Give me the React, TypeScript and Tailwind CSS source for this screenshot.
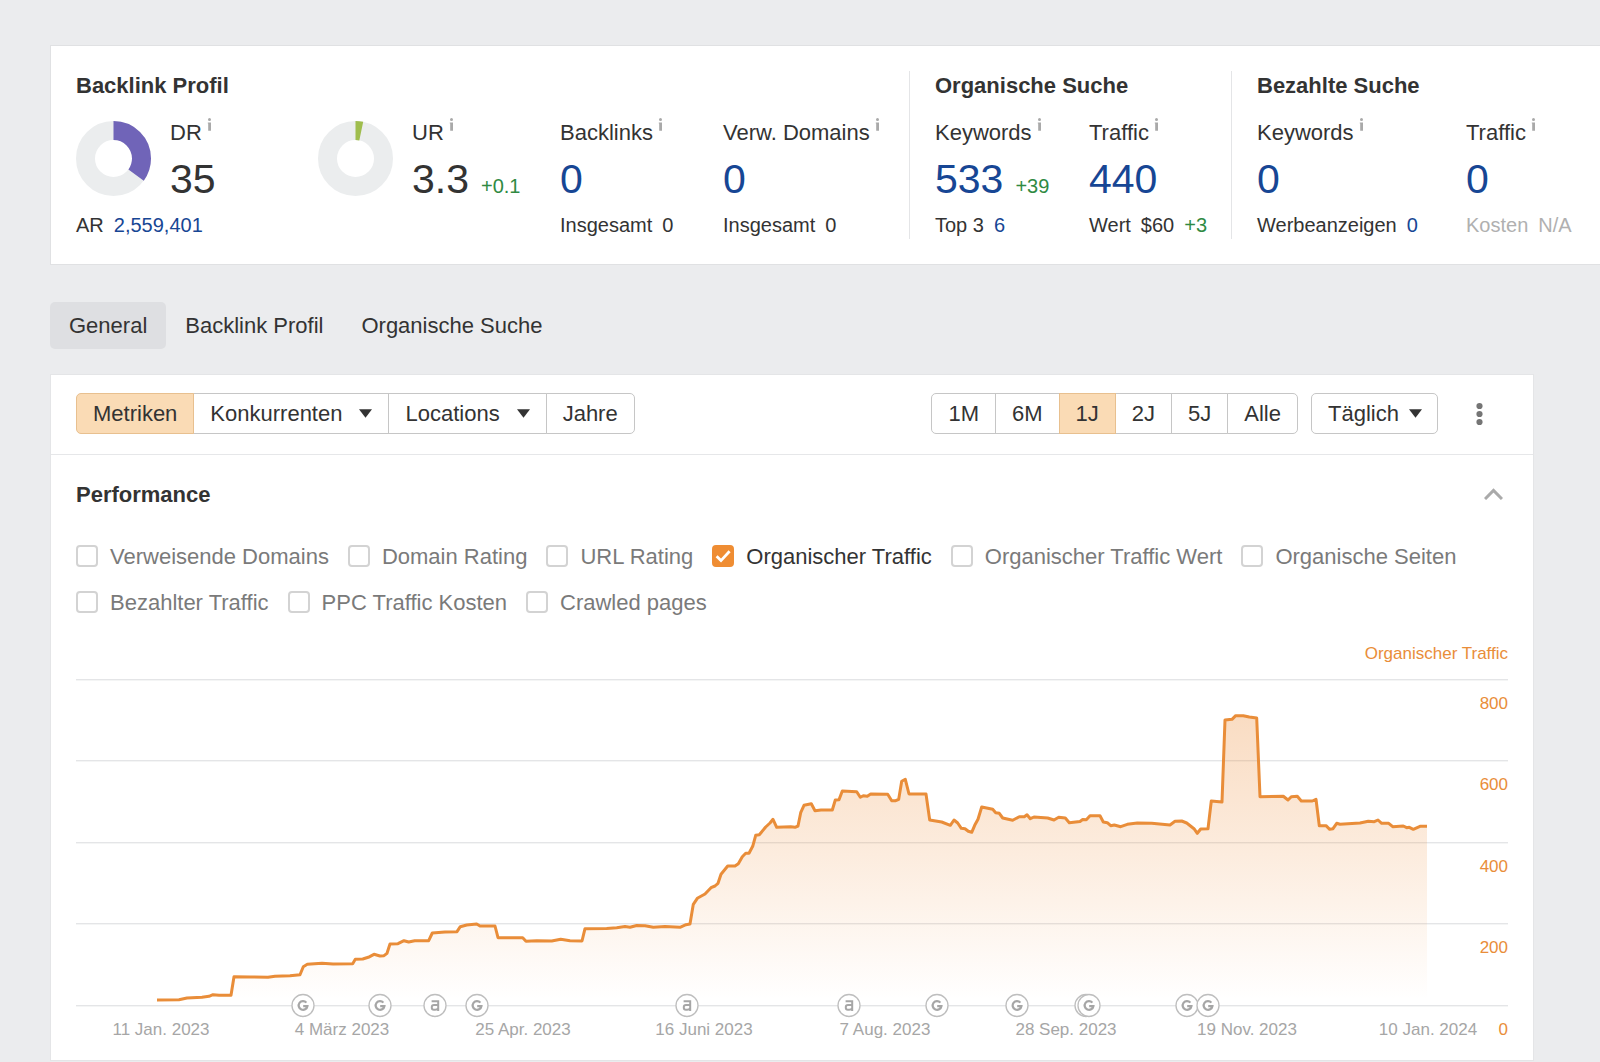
import { useState, type ReactNode } from "react"
import clsx from "clsx"

const TABS = ["General", "Backlink Profil", "Organische Suche"]
const RANGES = ["1M", "6M", "1J", "2J", "5J", "Alle"]
const METRICS = [
  "Verweisende Domains",
  "Domain Rating",
  "URL Rating",
  "Organischer Traffic",
  "Organischer Traffic Wert",
  "Organische Seiten",
  "Bezahlter Traffic",
  "PPC Traffic Kosten",
  "Crawled pages",
]

const GRID = [
  { y: 39, label: "800" },
  { y: 120, label: "600" },
  { y: 202, label: "400" },
  { y: 283, label: "200" },
  { y: 365, label: "0" },
]

const DATES = [
  "11 Jan. 2023",
  "4 März 2023",
  "25 Apr. 2023",
  "16 Juni 2023",
  "7 Aug. 2023",
  "28 Sep. 2023",
  "19 Nov. 2023",
  "10 Jan. 2024",
]

const MARKERS = [
  { x: 227, kind: "google" },
  { x: 304, kind: "google" },
  { x: 359, kind: "ahrefs" },
  { x: 401, kind: "google" },
  { x: 611, kind: "ahrefs" },
  { x: 773, kind: "ahrefs" },
  { x: 861, kind: "google" },
  { x: 941, kind: "google" },
  { x: 1010, kind: "google" },
  { x: 1013, kind: "google" },
  { x: 1111, kind: "google" },
  { x: 1132, kind: "google" },
]

const TRAFFIC_LINE =
  "81,360 103,359.7 111,358 126,357.3 133,356.3 137,354.7 143,355.3 155,355.3 158,336.7 174,337 192,337.3 199,336.3 214,335.7 224,334.7 227.3,326.7 231.3,324.3 246,323.3 257,324 276.7,323.7 279.3,319.3 286.7,319 292.3,317.3 298,314.3 304,316 308,315.7 311,313.3 314,304 322,303.7 328,300.7 332.7,302 338.7,300.7 352.7,300.7 356.3,293 369,292 381,291.7 384.3,286.7 390.7,285 400.7,284 404,286 419,286 422,297.7 446.7,297.7 450,301.3 460.7,300.7 475.7,301 484.7,299.3 494,300.7 506,301 509,288.7 530.7,288.5 540.7,287.7 549,286.6 554,287.3 560.7,285.5 569,285.8 577.3,287.3 589,286.6 604,287.3 610,284.7 614,284 617.3,264.3 621.3,258.3 629,254 635,247.7 639,246 642,243.3 645,234.3 651.7,226 659,226 662.3,223.7 666.3,216.7 669.7,213.3 673,213.3 676.7,206.3 679.7,195.3 683.3,194.7 689.7,187 694,183 697,179.3 700.7,187.3 714.7,186.7 719,187.3 722,186 724.7,172.7 728,165.3 735.3,163.7 739,170.7 745,170 756.3,170 759.3,160 763,159.7 766.3,151 780.7,151.7 784.3,157.3 787.3,155.7 791.3,156.3 794.7,154 811.7,154.3 815.7,160.7 819.7,160.7 822.7,159.3 825.7,141.3 829.3,139.3 833,154 850,154 853.7,180 865.7,182 874.3,185.3 878,180 881.7,183 885.3,188.3 889,188.7 892.3,191.3 895.7,192.3 898.7,185.3 902,179.3 905.7,167 916.7,169.3 919.7,172.7 923.3,173.3 926.7,178 936.7,180.3 943.3,176.7 948.3,176.7 951,174.7 954.3,178.7 958,177 971.7,178 978,180 982.7,177.3 989.3,178 993.3,182.7 1004,181.5 1006.7,179.5 1010.3,179.7 1014,175.8 1024,175.8 1027.3,182 1031.3,182.7 1034.7,185.7 1038.3,185 1044.7,186.7 1051.3,184.3 1061.3,183 1075.7,183.3 1094,185 1099,181.3 1105.7,181 1110.7,183 1118,188.7 1121.3,193.3 1124.7,189 1132,188.7 1135.3,161 1146,162 1149,80 1156,79.3 1159.7,75.7 1167.3,75.7 1173.3,77 1180.7,78 1184,156.7 1207.3,156.3 1212,160 1215.3,156.7 1221.3,156.3 1225.3,161 1236.3,161 1240,159.3 1243.3,185.7 1250,185.7 1253.7,189.3 1257,188.7 1260.7,183.3 1264,184.3 1284,183 1292.3,181.3 1298.3,181.7 1302,180 1305.7,183.3 1312.7,183.3 1316.7,186.7 1327.3,186 1330.7,187.7 1333.3,187.3 1337.3,189.3 1344,186.3 1351,186.3"

function InfoMark() {
  return (
    <svg width="5" height="13" viewBox="0 0 5 13" className="shrink-0 fill-[#a9a9a9]" aria-hidden="true">
      <circle cx="2.5" cy="1.5" r="1.5" />
      <path d="M0.8 4.4h3.2v8.4H1.2V5.6H0.8z" />
    </svg>
  )
}

// share is a fraction of the full ring, starting at 12 o'clock
function Donut({ share, color }: { share: number; color: string }) {
  const r = 28
  const length = 2 * Math.PI * r
  return (
    <svg width="75" height="75" viewBox="0 0 75 75" className="mt-[3px] shrink-0" aria-hidden="true">
      <g fill="none" strokeWidth="19" transform="rotate(-90 37.5 37.5)">
        <circle cx="37.5" cy="37.5" r={r} stroke="#ebedee" />
        <circle cx="37.5" cy="37.5" r={r} stroke={color} strokeDasharray={`${share * length} ${length}`} />
      </g>
    </svg>
  )
}

interface StatProps {
  label: string
  value: string
  delta?: string
  link?: boolean
  children?: ReactNode
}

function Stat({ label, value, delta, link, children }: StatProps) {
  return (
    <div className="whitespace-nowrap">
      <div className="flex h-[30px] gap-[5px] leading-[30px]">
        {label}
        <InfoMark />
      </div>
      <div className="mt-[7px] flex h-12 items-baseline gap-3 text-[41px] leading-[48px]">
        {link ? <a href="#" className="text-[#174694]">{value}</a> : <span>{value}</span>}
        {delta && <span className="text-[20px] leading-7 text-[#2f8a43]">{delta}</span>}
      </div>
      {children && <div className="mt-2 flex gap-[10px] text-[20px] leading-7">{children}</div>}
    </div>
  )
}

function Caret() {
  return (
    <svg width="13" height="9" viewBox="0 0 13 9" className="shrink-0 fill-[#333]" aria-hidden="true">
      <path d="M0 0.2h13L6.5 8.8z" />
    </svg>
  )
}

interface SegmentProps {
  active?: boolean
  onClick?: () => void
  children: ReactNode
}

function Segment({ active, onClick, children }: SegmentProps) {
  return (
    <button
      onClick={onClick}
      className={clsx(
        "-ml-px flex h-[41px] items-center gap-[17px] border px-4 first:ml-0 first:rounded-l-[5px] last:rounded-r-[5px]",
        active ? "relative border-[#e8c08f] bg-[#fadbb5]" : "border-[#c6c6c6] bg-white",
      )}
    >
      {children}
    </button>
  )
}

function Marker({ x, kind }: { x: number; kind: string }) {
  return (
    <g transform={`translate(${x} 365.5)`} fill="none" stroke="#a6a6a6">
      <circle r="11" fill="#fff" stroke="#bebebe" strokeWidth="1.3" />
      {kind === "google" ? (
        <path d="M3.4 -2.9A4.4 4.4 0 1 0 4.4 0.7H0.2" strokeWidth="2.2" />
      ) : (
        <path d="M-3.4 -4.2H3.2V5.4M3.2 -0.4H-1Q-3.2 -0.4 -3.2 1.6V2.2Q-3.2 4.2 -1.2 4.2H0.2Q2 4.2 3.2 2.8" strokeWidth="2" />
      )}
    </g>
  )
}

function TrafficChart() {
  return (
    <svg viewBox="0 0 1432 400" className="mt-[15px] block w-full text-[17px]" role="img" aria-label="Organischer Traffic">
      <defs>
        <linearGradient id="traffic-fill" gradientUnits="userSpaceOnUse" x1="0" y1="75" x2="0" y2="360">
          <stop offset="0" stopColor="#ed8b35" stopOpacity="0.3" />
          <stop offset="0.5" stopColor="#ed8b35" stopOpacity="0.16" />
          <stop offset="1" stopColor="#ed8b35" stopOpacity="0" />
        </linearGradient>
      </defs>
      {GRID.map((line) => (
        <rect key={line.y} x="0" y={line.y} width="1432" height="1.4" fill="#e4e5e7" />
      ))}
      <polygon points={`${TRAFFIC_LINE} 1351,365 81,365`} fill="url(#traffic-fill)" />
      <polyline points={TRAFFIC_LINE} fill="none" stroke="#e98d39" strokeWidth="3" strokeLinejoin="round" />
      {MARKERS.map((marker) => (
        <Marker key={marker.x} {...marker} />
      ))}
      <g fill="#a6a6a6" textAnchor="middle">
        {DATES.map((date, i) => (
          <text key={date} x={85 + i * 181} y="395">{date}</text>
        ))}
      </g>
      <g fill="#e98d39" textAnchor="end">
        <text x="1432" y="19">Organischer Traffic</text>
        {GRID.map((line) => (
          <text key={line.label} x="1432" y={line.y + 30}>{line.label}</text>
        ))}
      </g>
    </svg>
  )
}

export default function App() {
  const [tab, setTab] = useState("General")
  const [range, setRange] = useState("1J")
  const [selected, setSelected] = useState(["Organischer Traffic"])

  const toggle = (name: string) =>
    setSelected((prev) => (prev.includes(name) ? prev.filter((m) => m !== name) : [...prev, name]))

  return (
    <div className="min-h-screen overflow-x-hidden bg-[#ebecee] pt-[45px] pl-[50px] font-['Liberation_Sans',Arial,sans-serif] text-[22px] text-[#333]">
      <section className="flex border border-r-0 border-[#e0e1e3] bg-white py-[25px] pl-[25px]">
        <div className="shrink-0">
          <h2 className="mb-[17px] leading-[30px] font-bold">Backlink Profil</h2>
          <div className="flex">
            <div className="w-[242px]">
              <div className="flex gap-[19px]">
                <Donut share={0.35} color="#7064b8" />
                <Stat label="DR" value="35" />
              </div>
              <div className="mt-2 flex gap-[10px] text-[20px] leading-7">
                <span>AR</span>
                <a href="#" className="text-[#174694]">2,559,401</a>
              </div>
            </div>
            <div className="flex w-[242px] gap-[19px]">
              <Donut share={0.033} color="#9fbd4d" />
              <Stat label="UR" value="3.3" delta="+0.1" />
            </div>
            <div className="w-[163px]">
              <Stat label="Backlinks" value="0" link>
                <span>Insgesamt</span>
                <span>0</span>
              </Stat>
            </div>
            <div className="w-[186px]">
              <Stat label="Verw. Domains" value="0" link>
                <span>Insgesamt</span>
                <span>0</span>
              </Stat>
            </div>
          </div>
        </div>

        <div className="shrink-0 border-l border-[#e4e5e7] pl-[25px]">
          <h2 className="mb-[17px] leading-[30px] font-bold">Organische Suche</h2>
          <div className="flex">
            <div className="w-[154px]">
              <Stat label="Keywords" value="533" delta="+39" link>
                <span>Top 3</span>
                <a href="#" className="text-[#174694]">6</a>
              </Stat>
            </div>
            <div className="w-[142px]">
              <Stat label="Traffic" value="440" link>
                <span>Wert</span>
                <span>$60</span>
                <span className="text-[#2f8a43]">+3</span>
              </Stat>
            </div>
          </div>
        </div>

        <div className="shrink-0 border-l border-[#e4e5e7] pl-[25px]">
          <h2 className="mb-[17px] leading-[30px] font-bold">Bezahlte Suche</h2>
          <div className="flex">
            <div className="w-[209px]">
              <Stat label="Keywords" value="0" link>
                <span>Werbeanzeigen</span>
                <a href="#" className="text-[#174694]">0</a>
              </Stat>
            </div>
            <Stat label="Traffic" value="0" link>
              <span className="text-[#b0b0b0]">Kosten</span>
              <span className="text-[#b0b0b0]">N/A</span>
            </Stat>
          </div>
        </div>
      </section>

      <nav className="mt-[37px] flex">
        {TABS.map((name) => (
          <button
            key={name}
            onClick={() => setTab(name)}
            className={clsx("h-[47px] rounded-[5px] px-[19px]", tab === name && "bg-[#dedfe2]")}
          >
            {name}
          </button>
        ))}
      </nav>

      <section className="mt-[25px] mr-[66px] border border-[#e4e5e7] bg-white">
        <div className="flex items-center justify-between border-b border-[#e6e7e9] pt-[18px] pr-[50px] pb-5 pl-[25px]">
          <div className="flex">
            <Segment active>Metriken</Segment>
            <Segment>Konkurrenten <Caret /></Segment>
            <Segment>Locations <Caret /></Segment>
            <Segment>Jahre</Segment>
          </div>
          <div className="flex items-center">
            <div className="flex">
              {RANGES.map((name) => (
                <Segment key={name} active={range === name} onClick={() => setRange(name)}>
                  {name}
                </Segment>
              ))}
            </div>
            <div className="relative ml-[13px]">
              <select aria-label="Täglich" className="block h-[41px] appearance-none rounded-[5px] border border-[#c6c6c6] bg-white pr-[38px] pl-4">
                <option>Täglich</option>
              </select>
              <span className="pointer-events-none absolute inset-y-0 right-4 flex items-center">
                <Caret />
              </span>
            </div>
            <button aria-label="Menü" className="ml-[38px]">
              <svg width="7" height="24" viewBox="0 0 7 24" className="fill-[#757575]">
                <circle cx="3.5" cy="4" r="3.1" />
                <circle cx="3.5" cy="12" r="3.1" />
                <circle cx="3.5" cy="20" r="3.1" />
              </svg>
            </button>
          </div>
        </div>

        <div className="px-[25px] pb-5">
          <div className="flex h-[78px] items-center justify-between pr-[5px]">
            <h2 className="font-bold">Performance</h2>
            <button aria-label="Performance">
              <svg width="19" height="12" viewBox="0 0 19 12" fill="none" stroke="#aaa" strokeWidth="3">
                <path d="M1 11L9.5 2.4L18 11" />
              </svg>
            </button>
          </div>

          <div className="flex flex-wrap gap-x-[19px]">
            {METRICS.map((name) => {
              const checked = selected.includes(name)
              return (
                <label key={name} className={clsx("flex h-[46px] items-center gap-3", checked ? "text-[#333]" : "text-[#7a7a7a]")}>
                  <span className="relative block size-[22px]">
                    <input
                      type="checkbox"
                      checked={checked}
                      onChange={() => toggle(name)}
                      className="block size-[22px] appearance-none rounded-[4px] border-2 border-[#d3d3d3] bg-white checked:border-[#ef8d33] checked:bg-[#ef8d33]"
                    />
                    {checked && (
                      <svg viewBox="0 0 22 22" className="pointer-events-none absolute inset-0" fill="none" stroke="#fff" strokeWidth="2.8">
                        <path d="M4.6 11.2L9 15.6L17.6 6.2" />
                      </svg>
                    )}
                  </span>
                  {name}
                </label>
              )
            })}
          </div>

          <TrafficChart />
        </div>
      </section>
    </div>
  )
}
